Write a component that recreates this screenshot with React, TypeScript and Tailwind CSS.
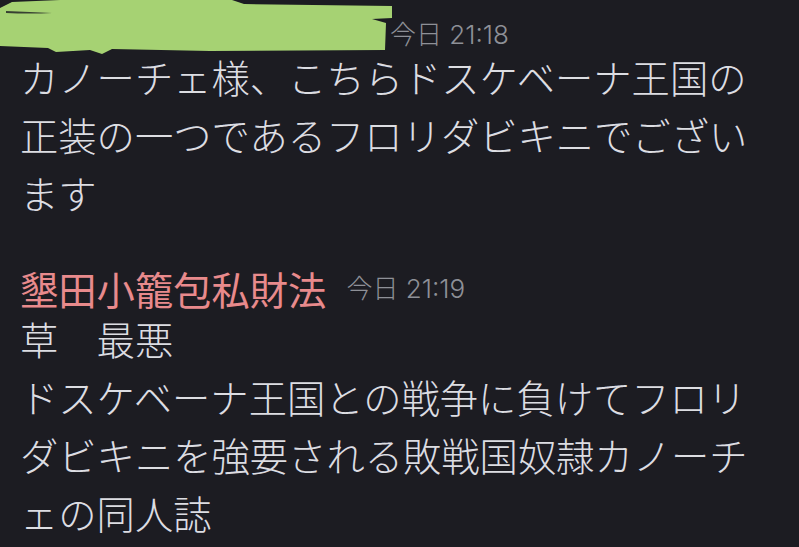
import React from 'react';

const jp = "font-['Noto_Sans_CJK_JP',sans-serif]";

function Scribble() {
  // green marker stroke hiding the first sender's name
  return (
    <svg
      className="absolute left-0 top-0"
      width="400"
      height="60"
      viewBox="0 0 400 60"
    >
      <path
        d="M0 8 L12 2 L60 0 L232 0 L244 4 L392 6 L392 18 L372 19 L386 23 L385 50 L210 51 L112 49 L102 54 L90 50 L56 52 L48 48 L0 46 Z"
        fill="#a6d273"
      />
      <path d="M6 11 Q30 12 52 13 Q30 14 6 13 Z" fill="#1c1c22" opacity="0.8" />
    </svg>
  );
}

function Stamp({ children }: { children: React.ReactNode }) {
  return (
    <span className="font-['Inter','Noto_Sans_CJK_JP',sans-serif] text-[26px] font-light text-[#8e9097] leading-none">
      {children}
    </span>
  );
}

export default function App() {
  return (
    <div className={`relative h-[547px] w-[799px] overflow-hidden bg-[#1c1c22] ${jp}`}>
      <Scribble />
      <div className="px-[20px]">
        {/* first message, name redacted */}
        <div className="mt-[22px] flex h-[26px] items-center">
          <span className="block w-[370px]" />
          <Stamp>今日 21:18</Stamp>
        </div>
        <p className="w-[750px] text-[38.3px] font-light leading-[58px] text-[#dcdde2]">
          カノーチェ様、こちらドスケベーナ王国の正装の一つであるフロリダビキニでございます
        </p>

        {/* second message */}
        <div className="mt-[46px] flex h-[42px] items-center gap-[20px]">
          <span className="text-[38.3px] font-normal leading-none text-[#e88a8c]">
            墾田小籠包私財法
          </span>
          <Stamp>今日 21:19</Stamp>
        </div>
        <div className="w-[750px] text-[38.3px] font-light leading-[58px] text-[#dcdde2]">
          <p>草　最悪</p>
          <p>ドスケベーナ王国との戦争に負けてフロリダビキニを強要される敗戦国奴隷カノーチェの同人誌</p>
        </div>
      </div>
    </div>
  );
}
